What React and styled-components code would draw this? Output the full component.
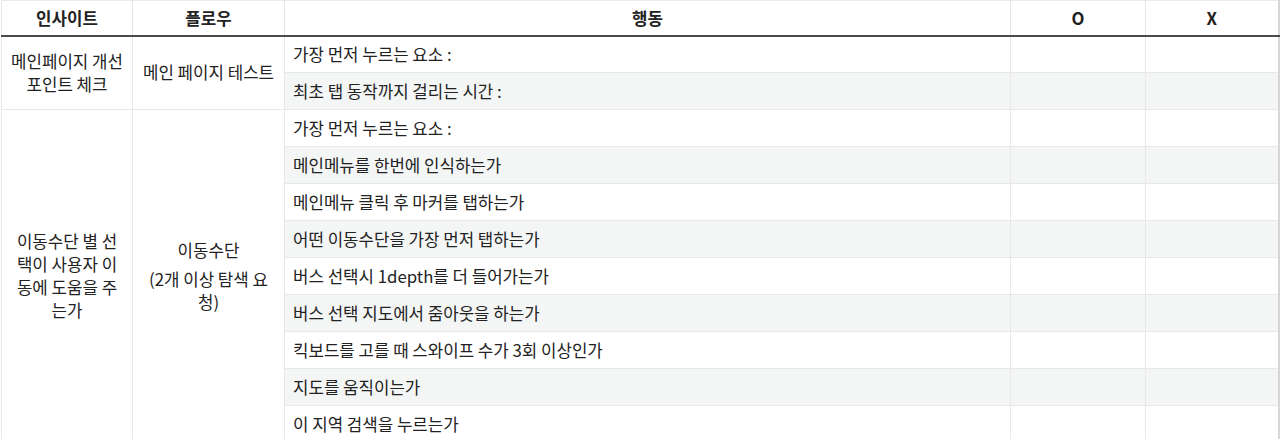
import React from "react";
import styled, { createGlobalStyle } from "styled-components";

const Global = createGlobalStyle`
  html, body { margin: 0; padding: 0; background: #fff; }
  body { font-family: "Noto Sans CJK KR", "Noto Sans", sans-serif; color: #222; overflow: hidden; }
`;

const Wrap = styled.div`
  width: 1280px;
  height: 439px;
  overflow: hidden;
  padding-left: 1px;
  box-sizing: border-box;
`;

const Table = styled.table`
  width: 1277px;
  table-layout: fixed;
  border-collapse: collapse;
  font-size: 16.8px;
  border-right: 2px solid #d6d6d6;
`;

const Th = styled.th`
  height: 35px;
  padding: 0 8px;
  font-weight: 700;
  font-size: 16.8px;
  text-align: center;
  background: #fff;
  border-left: 1px solid #e6e6e6;
  border-right: 1px solid #e6e6e6;
  border-bottom: 2px solid #4a4a4a;
  border-top: 1px solid #eaeaea;
  box-sizing: border-box;
`;

const Row = styled.tr`
  height: 37px;
`;

const Td = styled.td`
  padding: 0 ${(p) => (p.$breakAll ? 10 : 8)}px;
  border: 1px solid #e8e8e8;
  background: ${(p) => (p.$shade ? "#f4f6f6" : "#fff")};
  text-align: ${(p) => (p.$center ? "center" : "left")};
  vertical-align: middle;
  line-height: 23px;
  word-break: ${(p) => (p.$breakAll ? "break-all" : "keep-all")};
  white-space: ${(p) => (p.$nowrap ? "nowrap" : "normal")};
  box-sizing: border-box;
`;

const Line = styled.span`
  display: block;
  margin-bottom: ${(p) => p.$gap || 0}px;
`;

const groups = [
  {
    insight: "메인페이지 개선 포인트 체크",
    flow: [{ t: "메인 페이지 테스트" }],
    breakAll: false,
    actions: ["가장 먼저 누르는 요소 :", "최초 탭 동작까지 걸리는 시간 :"],
  },
  {
    insight: "이동수단 별 선택이 사용자 이동에 도움을 주는가",
    flow: [{ t: "이동수단", gap: 6 }, { t: "(2개 이상 탐색 요청)" }],
    breakAll: true,
    actions: [
      "가장 먼저 누르는 요소 :",
      "메인메뉴를 한번에 인식하는가",
      "메인메뉴 클릭 후 마커를 탭하는가",
      "어떤 이동수단을 가장 먼저 탭하는가",
      "버스 선택시 1depth를 더 들어가는가",
      "버스 선택 지도에서 줌아웃을 하는가",
      "킥보드를 고를 때 스와이프 수가 3회 이상인가",
      "지도를 움직이는가",
      "이 지역 검색을 누르는가",
    ],
  },
];

export default function App() {
  let idx = 0;
  return (
    <Wrap>
      <Global />
      <Table>
        <colgroup>
          <col style={{ width: 131 }} />
          <col style={{ width: 152 }} />
          <col style={{ width: 726 }} />
          <col style={{ width: 135 }} />
          <col style={{ width: 133 }} />
        </colgroup>
        <thead>
          <tr>
            <Th>인사이트</Th>
            <Th>플로우</Th>
            <Th>행동</Th>
            <Th>O</Th>
            <Th>X</Th>
          </tr>
        </thead>
        <tbody>
          {groups.map((g) =>
            g.actions.map((a, i) => {
              const shade = idx % 2 === 1;
              idx += 1;
              return (
                <Row key={`${g.insight}-${i}`}>
                  {i === 0 && (
                    <Td rowSpan={g.actions.length} $center $breakAll={g.breakAll}>
                      {g.insight}
                    </Td>
                  )}
                  {i === 0 && (
                    <Td rowSpan={g.actions.length} $center $breakAll={g.breakAll}>
                      {g.flow.map((f) => (
                        <Line key={f.t} $gap={f.gap}>
                          {f.t}
                        </Line>
                      ))}
                    </Td>
                  )}
                  <Td $shade={shade} $nowrap>
                    {a}
                  </Td>
                  <Td $shade={shade} />
                  <Td $shade={shade} />
                </Row>
              );
            })
          )}
        </tbody>
      </Table>
    </Wrap>
  );
}
